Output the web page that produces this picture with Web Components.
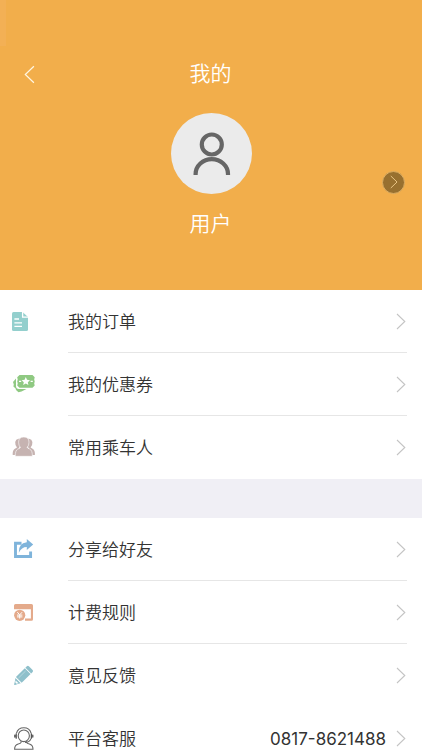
<!DOCTYPE html>
<html lang="zh-CN">
<head>
<meta charset="utf-8">
<title>我的</title>
<style>
  html, body {
    margin: 0;
    height: 100%;
    overflow: hidden;
    background: #fff;
  }
  body {
    font-family: "Liberation Sans", "Noto Sans CJK SC", sans-serif;
    color: #333;
  }
</style>
</head>
<body>
<mine-page></mine-page>

<script>
const icons = {
  order: `
    <path fill="#93cfcd" d="M1.5 3H10.5L16 8V20.5Q16 22 14.5 22H1.5Q0 22 0 20.5V4.5Q0 3 1.5 3Z"/>
    <path fill="none" stroke="#fff" stroke-width="1.3" d="M10.6 3V8.1H16M2.4 10H7M2.4 13.8H10M2.4 17.4H10"/>`,
  coupon: `
    <path fill="#8fc982" d="M1 10L4 6.5V14Q4 17 7 17H14.5L9.5 19.4L6.5 20.2L4 18L3.6 16.6L1.4 14.4L1.8 12.4Z"/>
    <path fill="#8fc982" d="M7.5 3H20.5L22.7 5.2L22.2 7.5L22.7 9.4L22.2 11.4L22.7 13.5L20.5 15.8H7.5L5.2 13.6L5.7 11.4L5.2 9.4L5.7 7.4L5.2 5.2Z"/>
    <path fill="#fff" d="M13.8 5.1L15 7.8L18 8.2L15.8 10.2L16.4 13.1L13.8 11.6L11.2 13.1L11.8 10.2L9.6 8.2L12.6 7.8Z"/>
    <path stroke="#fff" stroke-width="1.2" d="M7 9.4H9.2M18.6 9.4H20.8"/>`,
  people: `
    <g fill="#c6b3b1">
      <path d="M6.5 3.8Q9 3.2 9.6 5L8 11L6 15L3.6 20H.7Q.4 15.5 2.5 14L5 12.4Q2.9 10 3.2 7Q3.7 4.2 6.5 3.8Z"/>
      <path d="M17 3.8Q14.6 3.2 14 5L15.5 11L17.6 15L20 20H22.9Q23.2 15.5 21 14L18.6 12.4Q20.7 10 20.4 7Q19.9 4.2 17 3.8Z"/>
      <path stroke="#fff" stroke-width=".6" d="M11.8 2Q17 2 17 7.2Q17 10.6 15.2 12.4Q15.4 13.3 17.8 14.1Q20.4 15.3 20.4 21.3H3.2Q3.2 15.3 5.8 14.1Q8.2 13.3 8.4 12.4Q6.6 10.6 6.6 7.2Q6.6 2 11.8 2Z"/>
    </g>`,
  share: `
    <path fill="none" stroke="#7fb4db" stroke-width="2.9" d="M9.5 6.3H3.5V19.5H18.6V14.6"/>
    <path fill="#7fb4db" d="M14.8 2L21.2 7.4L14.8 13V10Q9.5 10 6.8 15.7Q6.3 6 14.8 5.2Z"/>`,
  fee: `
    <path fill="#e4aa8b" d="M3.5 4H19.5Q21 4 21 5.5V19.2Q21 20.7 19.5 20.7H13V18.6H18.9V9.2H2V5.5Q2 4 3.5 4Z"/>
    <circle cx="7.7" cy="15.3" r="5.6" fill="#e4aa8b"/>
    <path fill="none" stroke="#fff" stroke-width="1" d="M5.3 12.2L7.7 14.8L10.1 12.2M7.7 14.8V18.6M5 15.1H10.4M5 16.9H10.4"/>`,
  feedback: `
    <g fill="#8fc0cb">
      <path d="M14.8 3.3Q15.8 2.4 16.9 3.3L20.6 7Q21.5 8 20.6 9L19.2 10.4L13.4 4.7Z"/>
      <path d="M12.8 5.3L18.6 11.1L9.7 19.8L3.9 14Z"/>
      <path d="M3.4 14.9L8.7 20.2L2.3 21.9Z"/>
    </g>
    <path fill="none" stroke="#c5e0e5" stroke-width=".7" d="M6.5 15L13.6 8"/>
    <path fill="#fff" d="M3.6 17.5L6.5 20.2L3.1 21Z"/>
    <path fill="#8fc0cb" d="M2.9 19.3L4.7 21.1L2.3 21.9Z"/>`,
  service: `
    <g fill="none" stroke="#666" stroke-width="1.1">
      <path d="M4.4 7.4Q6 1.8 11.8 1.8Q17.6 1.8 19.2 7.4"/>
      <ellipse cx="11.8" cy="9.8" rx="5.6" ry="5.8"/>
      <path d="M9 15.2V16.6Q8.6 17.5 6.2 18Q2.6 19 2.6 23.2H21Q21 19 17.4 18Q15 17.5 14.6 16.6V15.2"/>
      <path d="M19 12.6Q17.8 16.2 13 16.5"/>
    </g>
    <path stroke="#555" stroke-width="1.3" stroke-linecap="round" d="M4.2 8V12.2M19.4 8V12.2M2.8 9.2V11M20.8 9.2V11"/>`
}

customElements.define('row-icon',
  class extends HTMLElement {
    constructor() {
      super()
      this.attachShadow({ mode: 'open' }).innerHTML = `
        <style>
          :host { display: block; width: 24px; height: 25px; flex: none; }
          svg { display: block; }
        </style>
        <svg width="24" height="25" viewBox="0 0 24 25">${icons[this.getAttribute('name')] || ''}</svg>`
    }
  })

const chevronTemplate = document.createElement('template')
chevronTemplate.innerHTML = `
  <style>
    :host { display: block; flex: none; color: #c4c4c4; }
    :host([left]) { transform: scaleX(-1); }
    svg { display: block; width: var(--chevron-width, 10px); height: var(--chevron-height, 17px); }
  </style>
  <svg viewBox="0 0 10 17"><path d="M1 1L8.8 8.5L1 16" fill="none" stroke="currentColor" stroke-width="1.1"/></svg>
`

customElements.define('chevron-icon',
  class extends HTMLElement {
    constructor() {
      super()
      this.attachShadow({ mode: 'open' })
        .appendChild(chevronTemplate.content.cloneNode(true))
    }
  })

const headerTemplate = document.createElement('template')
headerTemplate.innerHTML = `
  <style>
    :host {
      display: flex;
      flex-direction: column;
      height: 290px;
      box-sizing: border-box;
      padding-top: 58px;
      background: linear-gradient(#f3b055, #f3b055) 0 0 / 6px 46px no-repeat #f2ae4b;
      color: #fff;
      font-size: 21px;
      line-height: 32px;
      font-weight: 350;
    }
    .bar, .user {
      display: grid;
      grid-template-columns: 60px 1fr 60px;
      align-items: center;
      text-align: center;
    }
    .bar { height: 32px; }
    .title { padding-right: 1px; }
    .bar chevron-icon {
      --chevron-width: 11px;
      --chevron-height: 19px;
      color: #fff6e2;
      margin-left: 24px;
      justify-self: start;
    }
    .user { margin-top: 23px; }
    .profile {
      grid-column: 2;
      display: flex;
      flex-direction: column;
      align-items: center;
    }
    .avatar { display: block; width: 81px; height: 81px; }
    .name { margin-top: 14px; padding-right: 1px; }
    .more {
      display: flex;
      align-items: center;
      justify-content: center;
      box-sizing: border-box;
      width: 23px;
      height: 23px;
      margin: 11px 17px 0 0;
      border: 1px solid #dcae63;
      border-radius: 50%;
      background: #98702f;
    }
    .more chevron-icon {
      --chevron-width: 8px;
      --chevron-height: 14px;
      color: #f2cf91;
      margin-left: 1px;
    }
    .side { align-self: center; justify-self: end; }
  </style>
  <div class="bar">
    <chevron-icon left></chevron-icon>
    <div class="title"><slot name="title"></slot></div>
  </div>
  <div class="user">
    <div class="profile">
      <svg class="avatar" viewBox="0 0 81 81">
        <circle cx="40.5" cy="40.5" r="40.5" fill="#ebebeb"/>
        <g fill="none" stroke="#666" stroke-width="4.2">
          <circle cx="40.8" cy="31.5" r="10"/>
          <path d="M24.6 62V61A16.2 14.9 0 0 1 57 61V62"/>
        </g>
      </svg>
      <div class="name"><slot name="user"></slot></div>
    </div>
    <div class="side"><div class="more"><chevron-icon></chevron-icon></div></div>
  </div>
`

customElements.define('profile-header',
  class extends HTMLElement {
    constructor() {
      super()
      this.attachShadow({ mode: 'open' })
        .appendChild(headerTemplate.content.cloneNode(true))
    }
  })

const rowTemplate = document.createElement('template')
rowTemplate.innerHTML = `
  <style>
    :host {
      display: flex;
      align-items: center;
      height: 63px;
      padding-left: 12px;
      font-size: 17px;
    }
    .body {
      flex: 1;
      display: flex;
      align-items: center;
      height: 63px;
      box-sizing: border-box;
      margin: 0 15px 0 32px;
      border-bottom: 1px solid #e6e6e6;
    }
    :host([last]) .body { border-bottom-color: transparent; }
    .label {
      flex: 1;
      padding-bottom: 2px;
      font-weight: 350;
    }
    .value {
      font-family: Inter, "Liberation Sans", sans-serif;
      font-size: 17px;
      padding-top: 2px;
      margin-right: 10px;
    }
    chevron-icon { margin-right: 1px; }
  </style>
  <slot name="icon"></slot>
  <div class="body">
    <div class="label"><slot></slot></div>
    <div class="value"><slot name="value"></slot></div>
    <chevron-icon></chevron-icon>
  </div>
`

customElements.define('menu-row',
  class extends HTMLElement {
    constructor() {
      super()
      this.attachShadow({ mode: 'open' })
        .appendChild(rowTemplate.content.cloneNode(true))
    }
  })

const pageTemplate = document.createElement('template')
pageTemplate.innerHTML = `
  <style>
    :host { display: block; height: 750px; overflow: hidden; }
    .gap { height: 39px; background: #f0eff5; }
  </style>
  <profile-header>
    <span slot="title">我的</span>
    <span slot="user">用户</span>
  </profile-header>
  <menu-row><row-icon slot="icon" name="order"></row-icon>我的订单</menu-row>
  <menu-row><row-icon slot="icon" name="coupon"></row-icon>我的优惠券</menu-row>
  <menu-row last><row-icon slot="icon" name="people"></row-icon>常用乘车人</menu-row>
  <div class="gap"></div>
  <menu-row><row-icon slot="icon" name="share"></row-icon>分享给好友</menu-row>
  <menu-row><row-icon slot="icon" name="fee"></row-icon>计费规则</menu-row>
  <menu-row last><row-icon slot="icon" name="feedback"></row-icon>意见反馈</menu-row>
  <menu-row last><row-icon slot="icon" name="service"></row-icon>平台客服<span slot="value">0817-8621488</span></menu-row>
`

customElements.define('mine-page',
  class extends HTMLElement {
    constructor() {
      super()
      this.attachShadow({ mode: 'open' })
        .appendChild(pageTemplate.content.cloneNode(true))
    }
  })
</script>
</body>
</html>
